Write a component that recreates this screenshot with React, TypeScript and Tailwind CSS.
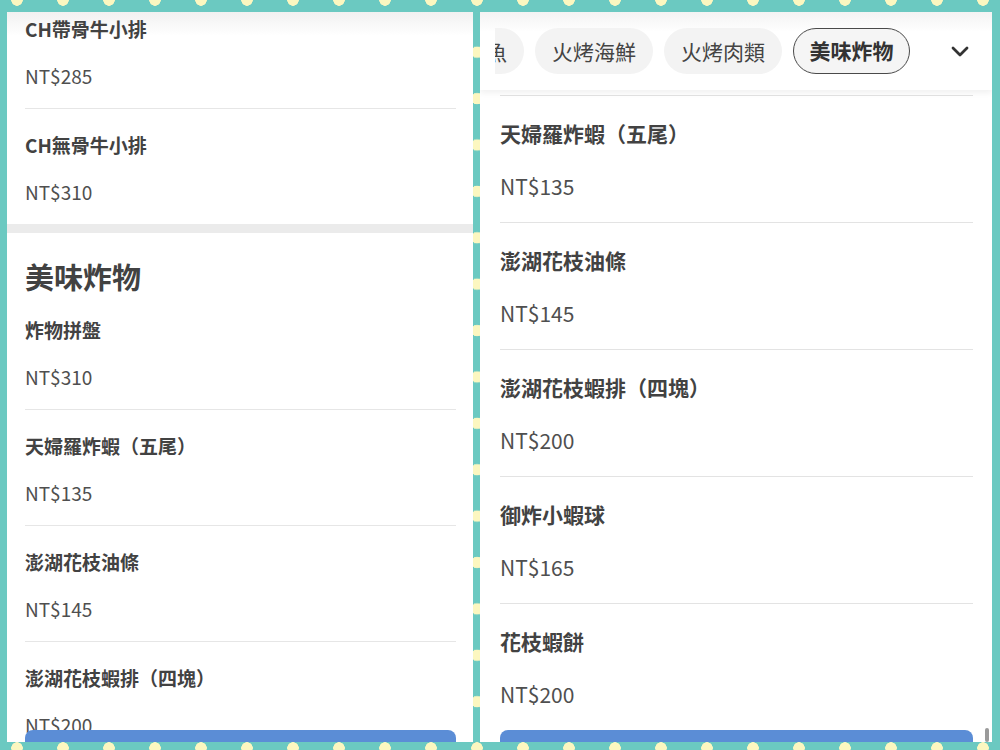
import React from "react";

const FONT = { fontFamily: '"Noto Sans CJK TC", "Noto Sans", sans-serif' };

function LItem({ title, price, border }: { title: string; price: string; border: boolean }) {
  return (
    <div className={border ? "pt-[23px] pb-[19px] border-b border-[#e6e6e6]" : "pt-[23px] pb-[19px]"}>
      <div className="text-[19px] leading-[26px] font-bold text-[#424242]">{title}</div>
      <div className="mt-[21px] text-[19px] leading-[26px] text-[#4f4f4f]">{price}</div>
    </div>
  );
}

function RItem({ title, price, border }: { title: string; price: string; border: boolean }) {
  return (
    <div className={border ? "pt-[23px] pb-[22px] border-b border-[#e3e3e3]" : "pt-[23px] pb-[22px]"}>
      <div className="text-[21px] leading-[28px] font-bold text-[#424242]">{title}</div>
      <div className="mt-[25px] text-[21px] leading-[28px] text-[#4f4f4f]">{price}</div>
    </div>
  );
}

function Chip({ label, active }: { label: string; active?: boolean }) {
  if (active) {
    return (
      <div className="h-[46px] px-[15.5px] rounded-full bg-[#f5f5f5] border-[1.5px] border-[#4a4a4a] text-[21px] leading-[43px] font-bold text-[#333333] whitespace-nowrap shrink-0">
        {label}
      </div>
    );
  }
  return (
    <div className="h-[46px] px-[17px] rounded-full bg-[#f3f3f3] text-[21px] leading-[46px] text-[#444444] whitespace-nowrap shrink-0">
      {label}
    </div>
  );
}

export default function App() {
  return (
    <div className="w-[1000px] h-[750px] overflow-hidden bg-[#6bc9c1] flex flex-col" style={FONT}>
      <div className="h-[12px] w-full shrink-0 bg-[image:radial-gradient(circle,#fcf7c0_5.5px,transparent_6px)] bg-[length:46px_12px] bg-[position:-6px_-6px] bg-repeat-x" />
      <div className="h-[730px] flex flex-row shrink-0">
        <div className="w-[7px] shrink-0" />
        {/* Left panel */}
        <div className="w-[466px] h-full shrink-0 relative overflow-hidden bg-[image:linear-gradient(#f1f1f1,#ffffff_24px)]">
          <div className="-mt-[19px]">
            <div className="pl-[18px] pr-[17px]">
              <LItem title="CH帶骨牛小排" price="NT$285" border />
              <LItem title="CH無骨牛小排" price="NT$310" border={false} />
            </div>
            <div className="h-[9px] bg-[#ebebeb]" />
            <div className="pl-[18px] pr-[17px]">
              <h2 className="pt-[25px] text-[29px] leading-[36px] font-bold text-[#424242]">美味炸物</h2>
              <LItem title="炸物拼盤" price="NT$310" border />
              <LItem title="天婦羅炸蝦（五尾）" price="NT$135" border />
              <LItem title="澎湖花枝油條" price="NT$145" border />
              <LItem title="澎湖花枝蝦排（四塊）" price="NT$200" border />
            </div>
          </div>
          <div className="absolute bottom-0 left-[18px] right-[17px] h-[12px] rounded-t-[8px] bg-[#5b8dd6]" />
        </div>
        {/* Divider with dots */}
        <div className="w-[7px] h-full shrink-0 bg-[image:radial-gradient(circle,#fcf7c0_5.5px,transparent_6px)] bg-[length:12px_46.4px] bg-[position:-2px_17px] bg-repeat-y" />
        {/* Right panel */}
        <div className="w-[512px] h-full shrink-0 relative overflow-hidden bg-white flex flex-col">
          <div className="h-[78px] shrink-0 relative z-10 bg-[image:linear-gradient(#f3f3f3,#ffffff_20px)] shadow-[0_3px_6px_rgba(0,0,0,0.06)] flex items-center">
            <div className="ml-[15px] w-[425px] overflow-hidden shrink-0">
              <div className="flex gap-[11px] -ml-[89px] w-max">
                <Chip label="火烤鮮魚" />
                <Chip label="火烤海鮮" />
                <Chip label="火烤肉類" />
                <Chip label="美味炸物" active />
                <Chip label="飲品" />
              </div>
            </div>
            <div className="flex-1 h-full flex items-center justify-center pl-[8px]">
              <svg width="18" height="12" viewBox="0 0 18 12" fill="none">
                <path d="M2 3 L9 10 L16 3" stroke="#333333" strokeWidth="2.8" strokeLinecap="round" strokeLinejoin="round" />
              </svg>
            </div>
          </div>
          <div className="pl-[20px] pr-[19px]">
            <div className="h-[6px] border-b border-[#e3e3e3]" />
            <RItem title="天婦羅炸蝦（五尾）" price="NT$135" border />
            <RItem title="澎湖花枝油條" price="NT$145" border />
            <RItem title="澎湖花枝蝦排（四塊）" price="NT$200" border />
            <RItem title="御炸小蝦球" price="NT$165" border />
            <RItem title="花枝蝦餅" price="NT$200" border={false} />
          </div>
          <div className="absolute bottom-0 left-[20px] right-[19px] h-[12px] rounded-t-[8px] bg-[#5b8dd6]" />
          <div className="absolute bottom-0 right-[3px] w-[4px] h-[14px] rounded-full bg-[#9a9a9a]" />
        </div>
        <div className="w-[8px] shrink-0" />
      </div>
      <div className="h-[8px] w-full shrink-0 bg-[image:radial-gradient(circle,#fcf7c0_5.5px,transparent_6px)] bg-[length:46px_12px] bg-[position:-6px_0px] bg-repeat-x" />
    </div>
  );
}
